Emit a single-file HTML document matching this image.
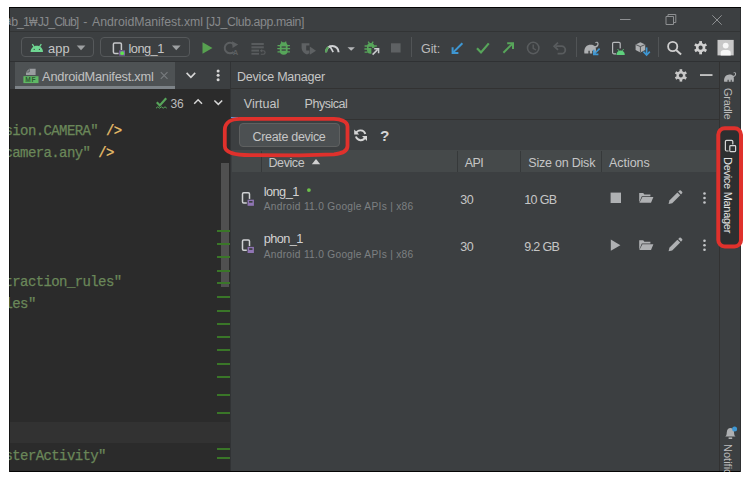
<!DOCTYPE html>
<html lang="ko"><head><meta charset="utf-8"><title>Device Manager</title>
<style>
html,body{margin:0;padding:0;background:#fff;}
body{width:750px;height:477px;overflow:hidden;position:relative;font-family:"Liberation Sans","Noto Sans CJK KR",sans-serif;}
#app{position:absolute;left:9px;top:7px;width:731.7px;height:464.8px;background:#3c3f41;overflow:hidden;}
#in{position:absolute;left:-9px;top:-7px;width:750px;height:477px;}
.b{position:absolute;}
.t{position:absolute;white-space:pre;line-height:1;}
.m{position:absolute;white-space:pre;line-height:1;font-family:"Liberation Mono","DejaVu Sans Mono",monospace;font-size:14px;letter-spacing:-0.6px;color:#6a8759;left:4.5px;-webkit-text-stroke:0.25px currentColor;}
.y{color:#e8bf6a;}
svg{position:absolute;overflow:visible;}
.v{position:absolute;white-space:pre;line-height:1;transform-origin:0 0;transform:rotate(90deg);}
</style></head><body>
<div id="app"><div id="in">
<div class="b" style="left:9px;top:7px;width:732px;height:1.2px;background:#050505;"></div>
<div class="b" style="left:9px;top:31px;width:732px;height:1px;background:#323435;"></div>
<div class="b" style="left:9px;top:60.5px;width:732px;height:1.5px;background:#2f3133;"></div>
<div class="b" style="left:9px;top:88.5px;width:221.6px;height:383.5px;background:#2b2b2b;"></div>
<div class="b" style="left:15px;top:62px;width:160.4px;height:23.5px;background:#4e5254;"></div>
<div class="b" style="left:15px;top:85.5px;width:160.4px;height:3.0px;background:#7d8388;"></div>
<div class="b" style="left:9px;top:421.5px;width:221.4px;height:21.5px;background:#323232;"></div>
<div class="b" style="left:220.5px;top:162.5px;width:8.5px;height:124.5px;background:#505050;"></div>
<div class="b" style="left:217px;top:229.5px;width:13.5px;height:2.0px;background:#3a7628;"></div>
<div class="b" style="left:217px;top:243.1px;width:13.5px;height:2.0px;background:#3a7628;"></div>
<div class="b" style="left:217px;top:255.89999999999998px;width:13.5px;height:2.0px;background:#3a7628;"></div>
<div class="b" style="left:217px;top:269.8px;width:13.5px;height:2.0px;background:#3a7628;"></div>
<div class="b" style="left:217px;top:282px;width:13.5px;height:2px;background:#3a7628;"></div>
<div class="b" style="left:217px;top:296.2px;width:13.5px;height:2.0px;background:#3a7628;"></div>
<div class="b" style="left:217px;top:309.8px;width:13.5px;height:2.0px;background:#3a7628;"></div>
<div class="b" style="left:217px;top:322.6px;width:13.5px;height:2.0px;background:#3a7628;"></div>
<div class="b" style="left:217px;top:336.4px;width:13.5px;height:2.0px;background:#3a7628;"></div>
<div class="b" style="left:217px;top:349.4px;width:13.5px;height:2.0px;background:#3a7628;"></div>
<div class="b" style="left:217px;top:363.1px;width:13.5px;height:2.0px;background:#3a7628;"></div>
<div class="b" style="left:217px;top:375.8px;width:13.5px;height:2.0px;background:#3a7628;"></div>
<div class="b" style="left:217px;top:393.6px;width:13.5px;height:2.0px;background:#3a7628;"></div>
<div class="b" style="left:217px;top:412.3px;width:13.5px;height:2.0px;background:#3a7628;"></div>
<div class="b" style="left:217px;top:447.8px;width:13.5px;height:2.0px;background:#3a7628;"></div>
<div class="b" style="left:217px;top:456.7px;width:13.5px;height:2.0px;background:#3a7628;"></div>
<div class="b" style="left:231px;top:62px;width:488.5px;height:410px;background:#3c3f41;"></div>
<div class="b" style="left:230.2px;top:62px;width:1.1px;height:410px;background:#313335;"></div>
<div class="b" style="left:231px;top:88px;width:488px;height:1px;background:#323232;"></div>
<div class="b" style="left:231px;top:118.5px;width:488px;height:1.0px;background:#323232;"></div>
<div class="b" style="left:231.2px;top:116.6px;width:6.4px;height:1.9px;background:#5a94d6;"></div>
<div class="b" style="left:231.5px;top:149.8px;width:484.5px;height:22.5px;background:#45494a;"></div>
<div class="b" style="left:260.5px;top:150.5px;width:1.0px;height:21.5px;background:#36393a;"></div>
<div class="b" style="left:456.8px;top:150.5px;width:1.0px;height:21.5px;background:#36393a;"></div>
<div class="b" style="left:520.3px;top:150.5px;width:1.0px;height:21.5px;background:#36393a;"></div>
<div class="b" style="left:601.1px;top:150.5px;width:1.0px;height:21.5px;background:#36393a;"></div>
<div class="b" style="left:239px;top:123px;width:100.7px;height:24px;background:#4c5052;border:1px solid #5e6060;border-radius:4px;box-sizing:border-box;"></div>
<div class="b" style="left:20.5px;top:37.3px;width:73.8px;height:20.2px;background:transparent;border:1px solid #56595b;border-radius:4px;box-sizing:border-box;"></div>
<div class="b" style="left:100.3px;top:37.3px;width:89.7px;height:20.2px;background:transparent;border:1px solid #56595b;border-radius:4px;box-sizing:border-box;"></div>
<div class="b" style="left:411.0px;top:37px;width:1.0px;height:20px;background:#515456;"></div>
<div class="b" style="left:575.5px;top:37px;width:1.0px;height:20px;background:#515456;"></div>
<div class="b" style="left:657.8px;top:37px;width:1.0px;height:20px;background:#515456;"></div>
<div class="b" style="left:719.5px;top:62px;width:21.5px;height:409px;background:#3c3f41;"></div>
<div class="b" style="left:719px;top:62px;width:1px;height:409px;background:#323232;"></div>
<div class="b" style="left:720px;top:129.5px;width:21px;height:115.5px;background:#2d2f30;"></div>
<div class="b" style="left:9px;top:470.6px;width:732px;height:1.4px;background:#050505;"></div>
<div class="b" style="left:9px;top:8px;width:0.9px;height:464px;background:#141414;"></div>
<div class="b" style="left:740px;top:8px;width:1px;height:464px;background:#2e3032;"></div>
<div class="t" id="t_ti1" style="left:11.20px;top:15.59px;font-size:12.3px;color:#87898b;letter-spacing:-0.977px">b_1</div>
<div class="t" id="t_ti0" style="left:29.40px;top:15.59px;font-size:12.3px;color:#87898b;transform-origin:0 0;transform:scaleX(0.732)">₩</div>
<div class="t" id="t_ti5" style="left:37.80px;top:15.59px;font-size:12.3px;color:#87898b;letter-spacing:-0.918px">JJ_Club]</div>
<div class="t" id="t_ti2" style="left:83.20px;top:15.59px;font-size:12.3px;color:#87898b;letter-spacing:0.191px">-</div>
<div class="t" id="t_ti3" style="left:92.00px;top:15.59px;font-size:12.3px;color:#87898b;letter-spacing:-0.021px">AndroidManifest.xml</div>
<div class="t" id="t_ti4" style="left:206.00px;top:15.59px;font-size:12.3px;color:#87898b;letter-spacing:-0.404px">[JJ_Club.app.main]</div>
<div class="t" id="t_app" style="left:48.10px;top:42.76px;font-size:12.8px;color:#c6c6c6;letter-spacing:0.114px">app</div>
<div class="t" id="t_long" style="left:128.50px;top:42.76px;font-size:12.8px;color:#c6c6c6;letter-spacing:-0.523px">long_1</div>
<div class="t" id="t_git" style="left:421.10px;top:42.82px;font-size:12.5px;color:#bbbbbb;letter-spacing:-0.113px">Git:</div>
<div class="t" id="t_tab" style="left:42.10px;top:70.96px;font-size:12.8px;color:#c0c0c0;letter-spacing:-0.239px">AndroidManifest.xml</div>
<div class="t" id="t_dm" style="left:237.00px;top:70.92px;font-size:12.5px;color:#c6c6c6;letter-spacing:-0.215px">Device Manager</div>
<div class="t" id="t_virtual" style="left:243.70px;top:98.32px;font-size:12.5px;color:#c6c6c6;letter-spacing:0.083px">Virtual</div>
<div class="t" id="t_physical" style="left:304.50px;top:98.32px;font-size:12.5px;color:#c6c6c6;letter-spacing:-0.456px">Physical</div>
<div class="t" id="t_create" style="left:252.50px;top:131.02px;font-size:12.5px;color:#c6c6c6;letter-spacing:-0.317px">Create device</div>
<div class="t" id="t_device" style="left:268.50px;top:156.92px;font-size:12.5px;color:#c6c6c6;letter-spacing:-0.420px">Device</div>
<div class="t" id="t_api" style="left:464.80px;top:157.02px;font-size:12.5px;color:#c6c6c6;letter-spacing:-0.585px">API</div>
<div class="t" id="t_size" style="left:528.30px;top:157.02px;font-size:12.5px;color:#c6c6c6;letter-spacing:-0.215px">Size on Disk</div>
<div class="t" id="t_actions" style="left:609.10px;top:157.02px;font-size:12.5px;color:#c6c6c6;letter-spacing:-0.071px">Actions</div>
<div class="t" id="t_r1" style="left:263.70px;top:186.26px;font-size:12.8px;color:#d2d2d2;letter-spacing:-0.556px">long_1</div>
<div class="t" id="t_s1" style="left:263.70px;top:202.27px;font-size:10.2px;color:#7d8082;letter-spacing:0.286px">Android 11.0 Google APIs | x86</div>
<div class="t" id="t_a1" style="left:460.30px;top:193.72px;font-size:12.5px;color:#c6c6c6;letter-spacing:-0.453px">30</div>
<div class="t" id="t_g1" style="left:524.30px;top:193.72px;font-size:12.5px;color:#c6c6c6;letter-spacing:-0.647px">10 GB</div>
<div class="t" id="t_r2" style="left:263.70px;top:233.26px;font-size:12.8px;color:#d2d2d2;letter-spacing:-0.601px">phon_1</div>
<div class="t" id="t_s2" style="left:263.70px;top:249.57px;font-size:10.2px;color:#7d8082;letter-spacing:0.286px">Android 11.0 Google APIs | x86</div>
<div class="t" id="t_a2" style="left:460.30px;top:240.92px;font-size:12.5px;color:#c6c6c6;letter-spacing:-0.453px">30</div>
<div class="t" id="t_g2" style="left:524.30px;top:240.92px;font-size:12.5px;color:#c6c6c6;letter-spacing:-0.687px">9.2 GB</div>
<div class="t" id="t_36" style="left:170.50px;top:98.04px;font-size:12px;color:#bbbbbb;letter-spacing:-0.180px">36</div>
<div class="t" style="left:4.6px;top:14.99px;font-size:12.3px;color:#87898b">a</div>
<div class="m" id="m0" style="top:123.94px">sion.CAMERA" <span class="y">/&gt;</span></div>
<div class="m" id="m1" style="top:145.59px">camera.any" <span class="y">/&gt;</span></div>
<div class="m" id="m7" style="top:275.49px">traction_rules"</div>
<div class="m" id="m8" style="top:297.14px">les"</div>
<div class="m" id="m15" style="top:448.69px">sterActivity"</div>
<div class="v" id="v_gradle" style="left:733.31px;top:87.80px;font-size:11px;color:#bbbbbb;letter-spacing:-0.272px">Gradle</div>
<div class="v" id="v_dm" style="left:733.31px;top:156.70px;font-size:11px;color:#e4e4e4;letter-spacing:-0.292px">Device Manager</div>
<div class="v" id="v_notif" style="left:733.31px;top:444.10px;font-size:11px;color:#bbbbbb;letter-spacing:0.006px">Notifications</div>
<!-- window controls -->
<svg style="left:0;top:0" width="750" height="477" viewBox="0 0 750 477">
<g fill="none" stroke="#8e9092" stroke-width="1">
<path d="M620 19.5h10.5"/>
<path d="M666 16.5h7.5v8h-7.5z"/><path d="M668 16.5v-2h7.8v8h-2.3"/>
<path d="M712.3 15.3l9.4 9.4M721.7 15.3l-9.4 9.4"/>
</g>

<!-- android head -->
<g fill="#6fd692">
<path d="M30.6 52c0-3.6 2.8-6.2 6.2-6.2s6.2 2.6 6.2 6.2z"/>
<path d="M32.300 44.100l1.800 2.800M41.300 44.100l-1.800 2.800" stroke="#6fd692" stroke-width="1.300" fill="none"/>
<circle cx="34.2" cy="49.4" r="0.6" fill="#3c3f41"/><circle cx="39.4" cy="49.4" r="0.6" fill="#3c3f41"/>
</g>
<!-- dropdown triangles -->
<path d="M76.7 45.5h8.7l-4.35 4.8z" fill="#9da0a2"/>
<path d="M171.9 45.5h8.7l-4.35 4.8z" fill="#9da0a2"/>
<!-- device icon in combo -->
<rect x="113.400" y="43" width="8" height="10.400" rx="1.300" fill="none" stroke="#c6c8ca" stroke-width="1.500"/>
<rect x="118.6" y="50" width="6.6" height="5.8" fill="#3c3f41"/>
<rect x="119.200" y="50.400" width="5.800" height="5.200" fill="#7f62a6"/>
<circle cx="122.200" cy="53.200" r="1.900" fill="#5fe34d"/>
<!-- run -->
<path d="M202.5 42.3l10 5.7-10 5.7z" fill="#57a150"/>
<!-- rerun (dim) -->
<path d="M233.6 52a5.300 5.300 0 1 1 0.900-6.800" fill="none" stroke="#5c5f61" stroke-width="2"/>
<path d="M232 41.200l6.200 3.200-5.600 3.600z" fill="#5c5f61"/>
<text x="232.8" y="55" font-family="Liberation Sans, sans-serif" font-size="7.6" font-weight="bold" fill="#5c5f61">A</text>
<!-- lines (dim) -->
<g fill="#595c5e">
<rect x="251.4" y="43" width="12.4" height="2"/>
<rect x="251.4" y="46.3" width="12.4" height="2"/>
<rect x="251.4" y="49.6" width="7.6" height="2"/>
<rect x="251.4" y="52.900" width="7.600" height="1.800"/>
</g>
<path d="M261.2 50.800h2.200a1.700 1.700 0 0 1 0 3.400h-2.600" fill="none" stroke="#595c5e" stroke-width="1.100"/>
<path d="M262.2 49l-2.400 1.800 2.400 1.800z" fill="#595c5e"/>
<!-- debug bug green -->
<g id="bug">
<path d="M279.8 46.2a3.9 3.9 0 0 1 7.8 0v4.6a3.9 3.9 0 0 1 -7.8 0z" fill="#57a55a"/>
<g stroke="#57a55a" stroke-width="1.3" fill="none">
<path d="M277.5 45.6h3M277.3 48.6h3M277.5 51.8h3M286.9 45.6h3M287.1 48.6h3M286.9 51.8h3"/>
<path d="M281.2 41.6l1.6 2.2M286.2 41.6l-1.6 2.2"/>
</g>
<rect x="281.6" y="46.4" width="4.2" height="1.3" fill="#3c3f41"/>
<rect x="281.6" y="49.4" width="4.2" height="1.3" fill="#3c3f41"/>
</g>
<!-- coverage (dim) -->
<path d="M301.6 43.2h7.8v2.2h-3.2v5.2h3.2v2.6l-2.4 1.4c-3-1.2-5.4-3.4-5.4-7z" fill="#5e6163"/>
<path d="M309.8 46.6l6.2 4.1-6.2 4.1z" fill="#5e6163"/>
<!-- profiler -->
<path d="M326 52.200a6.300 6.300 0 0 1 12.600 0" fill="none" stroke="#d0d2d4" stroke-width="2"/>
<path d="M326 52.200a6.300 6.300 0 0 1 2.400-5" fill="none" stroke="#57a55a" stroke-width="2.200"/>
<path d="M329.600 45.600l3.600 6.600" stroke="#d0d2d4" stroke-width="1.700" fill="none"/>
<path d="M347.500 47.200h7.400l-3.700 3.600z" fill="#b4b6b8"/>
<!-- attach debugger -->
<path d="M367 46.6a3.7 3.7 0 0 1 7.4 0v1.4h-3v5.8h-0.7a3.7 3.7 0 0 1 -3.7-3.6z" fill="#57a55a"/>
<g stroke="#57a55a" stroke-width="1.3" fill="none">
<path d="M364.6 46h3M364.4 49h3M364.6 52.2h3M373.8 46h3"/>
<path d="M368.2 41.6l1.5 2.3M373.2 41.6l-1.5 2.3"/>
</g>
<rect x="368.6" y="46.8" width="3.4" height="1.2" fill="#3c3f41"/>
<path d="M372.6 54.6l5.2-5.2" stroke="#c9cbcd" stroke-width="1.5" fill="none"/>
<path d="M374.2 48.8h4.4v4.4" stroke="#c9cbcd" stroke-width="1.5" fill="none"/>
<!-- stop dim -->
<rect x="391" y="43.3" width="9.6" height="9.2" fill="#5e6163"/>

<!-- git arrows -->
<g fill="none" stroke-width="2">
<path d="M462.4 43.200l-9.200 9.200" stroke="#3e97d3"/>
<path d="M452.600 47.200v5.800h5.800" stroke="#3e97d3"/>
<path d="M477 48.200l4 4.200 7.800-9" stroke="#57a55a" stroke-width="2.200"/>
<path d="M503.400 52.800l9.200-9.200" stroke="#57a55a"/>
<path d="M507.200 43.200h5.800v5.800" stroke="#57a55a"/>
</g>
<!-- clock dim -->
<circle cx="533.200" cy="48" r="5.700" fill="none" stroke="#595c5e" stroke-width="1.600"/>
<path d="M533.200 44.400v3.900l2.800 1.700" fill="none" stroke="#595c5e" stroke-width="1.400"/>
<!-- undo dim -->
<path d="M556 46.200h5.600a3.700 3.700 0 0 1 0 7.400h-4" fill="none" stroke="#595c5e" stroke-width="1.800"/>
<path d="M558 42.600l-3.800 3.600 3.800 3.600" fill="none" stroke="#595c5e" stroke-width="1.800"/>

<!-- gradle elephant + blue arrow -->
<g id="eleph" fill="#aeb0b2">
<path d="M584.4 53.4c-0.6-4 1-8 5-8.6c2.6-0.4 4.4 0.2 5.6 1.4c1.6-0.2 2.6-1.4 2.4-2.6c-0.1-0.8-1-1-1.4-0.4l-0.9-0.5c0.8-1.4 3.2-1.2 3.5 0.7c0.3 2-1.2 3.8-3 4.2c0.6 1.6 0.2 3.4 0.2 5.8h-2.4v-2.6h-1.2v2.6h-2.4v-2.6h-1.4v2.6z"/>
</g>
<path d="M599.6 48.6l-5.2 5.2" stroke="#3e97d3" stroke-width="1.6" fill="none"/>
<path d="M593.8 49.8v4.6h4.6" stroke="#3e97d3" stroke-width="1.6" fill="none"/>
<!-- device + android -->
<rect x="612.6" y="42.4" width="7.6" height="11.4" rx="1.2" fill="none" stroke="#b8babc" stroke-width="1.2"/>
<rect x="616" y="48.4" width="9.4" height="7" fill="#3c3f41"/>
<path d="M616.4 55c0-2.6 1.8-4.4 4.2-4.4s4.2 1.8 4.2 4.4z" fill="#5fd07d"/>
<path d="M617.6 49l1.2 1.8M623.6 49l-1.2 1.8" stroke="#5fd07d" stroke-width="0.8"/>
<!-- sdk cube + arrow -->
<path d="M640.4 42.2l4.8 2.2v5.6l-4.8 2.4-4.8-2.4v-5.6z" fill="#aeb0b2"/>
<path d="M640.4 46.6v5.6M635.8 44.6l4.6 2 4.6-2" stroke="#3c3f41" stroke-width="0.8" fill="none"/>
<path d="M646.6 47.4v7.2" stroke="#3e97d3" stroke-width="1.7" fill="none"/>
<path d="M643.4 51.6l3.2 3.4 3.2-3.4" stroke="#3e97d3" stroke-width="1.6" fill="none"/>
<!-- search -->
<circle cx="672.700" cy="46.500" r="4.600" fill="none" stroke="#cecece" stroke-width="1.800"/>
<path d="M676.100 50l5 4.600" stroke="#cecece" stroke-width="2" fill="none"/>
<!-- gear toolbar -->
<g id="gear1" transform="translate(700.600 47.700)">
<g fill="#d0d0d0">
<rect x="-1.4" y="-6.6" width="2.8" height="13.2"/>
<rect x="-1.4" y="-6.6" width="2.8" height="13.2" transform="rotate(60)"/>
<rect x="-1.4" y="-6.6" width="2.8" height="13.2" transform="rotate(120)"/>
<circle r="4.7"/>
</g>
<circle r="2.1" fill="#3c3f41"/>
</g>
<!-- avatar -->
<rect x="717.500" y="39.900" width="16.200" height="15.500" fill="#c8c8c8"/>
<circle cx="725.700" cy="45.600" r="2.900" fill="#f6f6f6"/>
<path d="M720.700 55.400v-2.600c0-2 1.400-2.900 3-2.900h4c1.600 0 3 0.900 3 2.900v2.600z" fill="#f6f6f6"/>

<!-- tab row: MF icon -->
<path d="M29.2 68.8h6.4v6.2h-9.6v-3z" fill="#9a9da0"/>
<path d="M29.2 68.8v3.2h-3.2" fill="none" stroke="#4e5254" stroke-width="0.8"/>
<rect x="23.4" y="76.2" width="15.1" height="6.9" fill="#5fb865"/>
<text x="25.3" y="82.3" font-family="Liberation Sans, sans-serif" font-size="6.6" font-weight="bold" fill="#2f5a33" letter-spacing="0.6">MF</text>
<!-- tab close -->
<path d="M160.800 72.100l6.700 6.700M167.500 72.100l-6.700 6.700" stroke="#787c7f" stroke-width="1.100" fill="none"/>
<!-- chevron down -->
<path d="M186.6 72.900l4.300 4.400 4.300-4.400" stroke="#d6d6d6" stroke-width="1.600" fill="none"/>
<!-- vertical dots -->
<g fill="#d6d6d6"><circle cx="218.100" cy="71" r="1.500"/><circle cx="218.100" cy="75.350" r="1.500"/><circle cx="218.100" cy="79.700" r="1.500"/></g>

<!-- inspection widget -->
<path d="M156.800 102.200l3 3.200 6.400-7.200" stroke="#57a55a" stroke-width="2.200" fill="none"/>
<path d="M156 108.200l1.800-1.400 1.800 1.400 1.800-1.400 1.800 1.400 1.800-1.400 1.800 1.400" stroke="#57a55a" stroke-width="1" fill="none"/>
<path d="M194.200 103.700l3.900-3.900 3.900 3.900" stroke="#d6d6d6" stroke-width="1.500" fill="none"/>
<path d="M214.400 100.500l3.900 3.900 3.900-3.900" stroke="#d6d6d6" stroke-width="1.500" fill="none"/>

<!-- DM header gear + minus -->
<g transform="translate(680.9 75.4)">
<g fill="#c8c8c8">
<rect x="-1.3" y="-6.2" width="2.6" height="12.4"/>
<rect x="-1.3" y="-6.2" width="2.6" height="12.4" transform="rotate(60)"/>
<rect x="-1.3" y="-6.2" width="2.6" height="12.4" transform="rotate(120)"/>
<circle r="4.4"/>
</g>
<circle r="2" fill="#3c3f41"/>
</g>
<rect x="700" y="74.2" width="12.5" height="1.7" fill="#d0d0d0"/>

<!-- refresh + help -->
<g transform="translate(721.300 0) scale(-1 1)">
<g fill="none" stroke="#d6d6d6" stroke-width="1.900">
<path d="M365.400 133.400a5 5 0 0 0 -9.400 0.600"/>
<path d="M356 137.200a5 5 0 0 0 9.400 -0.600"/>
</g>
<path d="M367.100 129.400v5h-5z" fill="#d6d6d6"/>
<path d="M354.300 141v-5h5z" fill="#d6d6d6"/>
</g>
<text x="380" y="141" font-family="Liberation Sans, sans-serif" font-size="15.4" font-weight="bold" fill="#d4d4d4">?</text>

<!-- sort triangle -->
<path d="M311.8 164.2l4.2-5.2 4.2 5.2z" fill="#d0d0d0"/>

<!-- row device icons -->
<g id="dev1">
<rect x="242.500" y="192.800" width="7" height="10.200" rx="1.200" fill="none" stroke="#cfd1d3" stroke-width="1.500"/>
<rect x="246.800" y="198.900" width="8" height="7.600" fill="#3c3f41"/>
<rect x="247.600" y="199.700" width="6.300" height="6.100" fill="#9075b4"/>
<rect x="249.100" y="201" width="3.400" height="1.700" fill="#3c3f41"/>
</g>
<g transform="translate(0 47.200)">
<rect x="242.500" y="192.800" width="7" height="10.200" rx="1.200" fill="none" stroke="#cfd1d3" stroke-width="1.500"/>
<rect x="246.800" y="198.900" width="8" height="7.600" fill="#3c3f41"/>
<rect x="247.600" y="199.700" width="6.300" height="6.100" fill="#9075b4"/>
<rect x="249.100" y="201" width="3.400" height="1.700" fill="#3c3f41"/>
</g>
<circle cx="308.9" cy="190.1" r="1.9" fill="#6cc04a"/>

<!-- row 1 actions -->
<rect x="610.6" y="192.6" width="10.4" height="10.4" fill="#afb1b3"/>
<g id="fold1" fill="#afb1b3">
<path d="M639.2 202.6v-9.6h4l1.2 1.4h6v1.8h-8.6z"/>
<path d="M642.4 197h11l-2.4 5.8h-11.6z"/>
</g>
<g id="pen1" fill="#afb1b3">
<path d="M668.6 204l0.8-3.6 8-8 2.8 2.8-8 8z"/>
<path d="M678.2 191.6l1.2-1.1a1 1 0 0 1 1.4 0l1.3 1.3a1 1 0 0 1 0 1.4l-1.1 1.2z"/>
</g>
<g fill="#c4c6c8"><circle cx="704.5" cy="193.5" r="1.3"/><circle cx="704.5" cy="198" r="1.3"/><circle cx="704.5" cy="202.5" r="1.3"/></g>
<!-- row 2 actions -->
<path d="M610.8 239.6l9.6 5.6-9.6 5.6z" fill="#afb1b3"/>
<g transform="translate(0 47.3)" fill="#afb1b3">
<path d="M639.2 202.6v-9.6h4l1.2 1.4h6v1.8h-8.6z"/>
<path d="M642.4 197h11l-2.4 5.8h-11.6z"/>
<path d="M668.6 204l0.8-3.6 8-8 2.8 2.8-8 8z"/>
<path d="M678.2 191.6l1.2-1.1a1 1 0 0 1 1.4 0l1.3 1.3a1 1 0 0 1 0 1.4l-1.1 1.2z"/>
</g>
<g fill="#c4c6c8"><circle cx="704.5" cy="240.7" r="1.3"/><circle cx="704.5" cy="245.2" r="1.3"/><circle cx="704.5" cy="249.7" r="1.3"/></g>

<!-- right sidebar: gradle elephant -->
<g transform="translate(201.700 34.500) scale(0.840 0.830)" fill="#aeb0b2">
<path d="M622 57c-0.6-4 1-8 5-8.6c2.6-0.4 4.4 0.2 5.6 1.4c1.6-0.2 2.6-1.4 2.4-2.6c-0.1-0.8-1-1-1.4-0.4l-0.9-0.5c0.8-1.4 3.2-1.2 3.5 0.7c0.3 2-1.2 3.8-3 4.2c0.6 1.6 0.2 3.4 0.2 5.8h-2.4v-2.600h-1.2v2.6h-2.4v-2.6h-1.400v2.6z"/>
</g>
<!-- sidebar device manager icon -->
<rect x="725.4" y="140.4" width="7.4" height="10.6" rx="1.2" fill="none" stroke="#d6d6d6" stroke-width="1.2"/>
<rect x="728.6" y="144.4" width="8" height="8" fill="#2d2f30"/>
<rect x="729.8" y="145.6" width="5.8" height="6" rx="0.8" fill="none" stroke="#d6d6d6" stroke-width="1.2"/>
<!-- bell -->
<path d="M725.2 436.6c1.6-1 1.4-3 1.6-4.600c0.300-2.400 1.600-4 3.600-4s3.300 1.600 3.600 4c0.200 1.600 0 3.600 1.600 4.600z" fill="#aeb0b2"/>
<rect x="728.6" y="437.4" width="3.6" height="1.6" fill="#aeb0b2"/>
<circle cx="734.6" cy="429" r="2.5" fill="#3e97d3"/>
</svg>
</div></div>
<!-- red annotations -->
<svg style="left:0;top:0" width="750" height="477" viewBox="0 0 750 477">
<path d="M240 118.8L334 118.8C340 119 347.5 121 347.5 126.500L347.5 146C347.5 151 342 153.600 334 154.300L300 155.300L250 155.200C235 155 224.800 153 224.800 146L224.800 130C224.800 122 232 118.800 240 118.800Z" fill="none" stroke="#e0312c" stroke-width="3.8" stroke-linejoin="round"/>
<rect x="718.3" y="128.3" width="22.7" height="118.3" rx="6.5" ry="6.5" fill="none" stroke="#e0312c" stroke-width="4"/>
</svg>
</body></html>
